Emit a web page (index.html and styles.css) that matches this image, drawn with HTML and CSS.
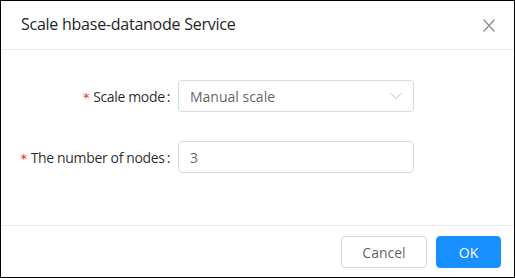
FILE: index.html
```html
<!DOCTYPE html>
<html lang="en">
<head>
  <meta charset="UTF-8">
  <meta name="viewport" content="width=device-width, initial-scale=1.0">
  <title>Scale Service</title>
  <link rel="stylesheet" href="styles.css">
</head>
<body>
  <div class="modal">
    <div class="modal-header">
      <div class="modal-title">Scale hbase-datanode Service</div>
      <span class="modal-close">
        <svg width="12" height="13" viewBox="0 0 12 13">
          <path d="M0.5 0.5 L11.5 12.5 M11.5 0.5 L0.5 12.5" stroke="#8c8c8c" stroke-width="1.2" fill="none"/>
        </svg>
      </span>
    </div>
    <div class="modal-body">
      <div class="form-row">
        <label class="form-label"><span class="required">*</span>Scale mode<span class="colon">:</span></label>
        <div class="select">
          <span class="select-value">Manual scale</span>
          <svg class="select-arrow" width="12" height="8" viewBox="0 0 12 8">
            <path d="M0.5 1 L6 6.5 L11.5 1" stroke="#bfbfbf" stroke-width="1" fill="none"/>
          </svg>
        </div>
      </div>
      <div class="form-row">
        <label class="form-label"><span class="required">*</span>The number of nodes<span class="colon">:</span></label>
        <input class="input" type="text" value="3">
      </div>
    </div>
    <div class="modal-footer">
      <button class="btn">Cancel</button>
      <button class="btn primary">OK</button>
    </div>
  </div>
</body>
</html>
```

FILE: styles.css
```css
body {
  margin: 0;
  font-family: "Open Sans", "Noto Sans", sans-serif;
  font-size: 14px;
  color: rgba(0, 0, 0, 0.85);
  background: #fff;
}
.modal {
  width: 515px;
  height: 278px;
  box-sizing: border-box;
  border: 1px solid #000;
  display: flex;
  flex-direction: column;
}
.modal-header {
  height: 49px;
  box-sizing: border-box;
  border-bottom: 1px solid #e8e8e8;
  display: flex;
  align-items: center;
  justify-content: space-between;
  padding: 0 19px 0 20px;
}
.modal-title {
  font-size: 16px;
  font-weight: 500;
  color: #1f1f1f;
  letter-spacing: -0.25px;
  margin-top: -2px;
}
.modal-close {
  display: flex;
  padding-top: 1px;
}
.modal-body {
  flex: 1;
  padding: 30px 0 0;
  display: flex;
  flex-direction: column;
  gap: 29px;
}
.form-row {
  display: flex;
  align-items: center;
}
.form-label {
  width: 177px;
  text-align: right;
  color: rgba(0, 0, 0, 0.85);
  letter-spacing: -0.35px;
}
.required {
  color: #f5222d;
  margin-right: 4px;
  font-family: SimSun, "DejaVu Sans", sans-serif;
  font-size: 13px;
}
.colon {
  margin: 0 8px 0 2px;
}
.select,
.input {
  width: 236px;
  height: 32px;
  box-sizing: border-box;
  border: 1px solid #d9d9d9;
  border-radius: 4px;
  font-family: inherit;
  font-size: 14px;
  color: rgba(0, 0, 0, 0.65);
  padding: 0 11px;
}
.select {
  display: flex;
  align-items: center;
  justify-content: space-between;
}
.input {
  outline: none;
}
.modal-footer {
  border-top: 1px solid #e8e8e8;
  height: 52px;
  box-sizing: border-box;
  display: flex;
  justify-content: flex-end;
  align-items: flex-start;
  gap: 9px;
  padding: 10px 13px 0 0;
}
.btn {
  height: 32px;
  padding: 0 15px;
  font-family: inherit;
  font-size: 14px;
  border: 1px solid #d9d9d9;
  border-radius: 4px;
  background: #fff;
  color: rgba(0, 0, 0, 0.65);
  width: 86px;
}
.btn.primary {
  background: #1890ff;
  border-color: #1890ff;
  color: #fff;
  width: 65px;
}
```
